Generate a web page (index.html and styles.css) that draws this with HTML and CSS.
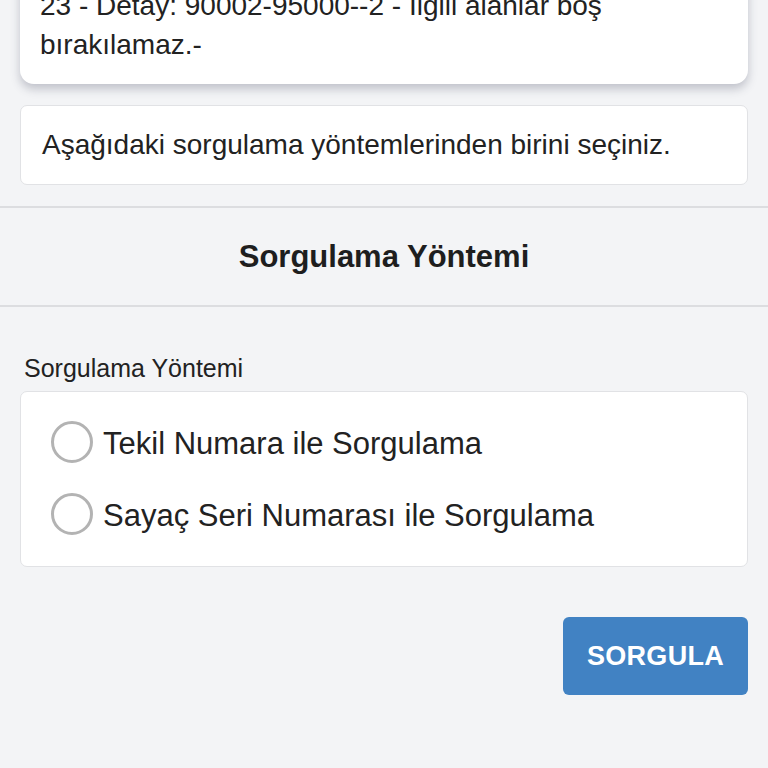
FILE: index.html
```html
<!DOCTYPE html>
<html lang="tr">
<head>
<meta charset="utf-8">
<title>Sorgulama</title>
<link rel="stylesheet" href="styles.css">
</head>
<body>
<div class="page">
  <div class="alert">23 - Detay: 90002-95000--2 - İlgili alanlar boş bırakılamaz.-</div>
  <div class="info">Aşağıdaki sorgulama yöntemlerinden birini seçiniz.</div>
  <div class="section-title">Sorgulama Yöntemi</div>
  <div class="field">
    <div class="field-label">Sorgulama Yöntemi</div>
    <div class="radio-card">
      <label class="radio-row"><span class="radio"></span><span class="radio-text">Tekil Numara ile Sorgulama</span></label>
      <label class="radio-row"><span class="radio"></span><span class="radio-text">Sayaç Seri Numarası ile Sorgulama</span></label>
    </div>
  </div>
  <div class="actions">
    <button class="btn">SORGULA</button>
  </div>
</div>
</body>
</html>
```
FILE: styles.css
```css
html, body {
  margin: 0;
  padding: 0;
  background: #f3f4f6;
  font-family: "Liberation Sans", Arial, sans-serif;
  color: #222;
  overflow: hidden;
}
.page {
  display: flex;
  flex-direction: column;
}
.alert {
  margin: -34px 20px 0;
  padding: 20px 20px;
  background: #fff;
  border-radius: 14px;
  box-shadow: 0 5px 10px rgba(60, 65, 90, 0.28);
  font-size: 28px;
  line-height: 39px;
}
.info {
  margin: 21px 20px 0;
  height: 78px;
  padding: 0 21px;
  display: flex;
  align-items: center;
  background: #fff;
  border: 1px solid #e1e2e5;
  border-radius: 7px;
  font-size: 28px;
}
.section-title {
  margin-top: 21px;
  height: 97px;
  border-top: 2px solid #dcdde0;
  border-bottom: 2px solid #dcdde0;
  display: flex;
  align-items: center;
  justify-content: center;
  font-size: 31px;
  font-weight: bold;
  color: #1e1e1e;
}
.field {
  margin: 47px 20px 0;
}
.field-label {
  padding-left: 4px;
  font-size: 25px;
  line-height: 28px;
  color: #222;
}
.radio-card {
  margin-top: 9px;
  padding: 15px 0;
  background: #fff;
  border: 1px solid #e1e2e5;
  border-radius: 7px;
}
.radio-row {
  height: 72px;
  display: flex;
  align-items: center;
  padding-left: 30px;
  gap: 10px;
}
.radio {
  width: 36px;
  height: 36px;
  border: 3px solid #b3b3b3;
  border-radius: 50%;
  flex: none;
  margin-top: -2px;
}
.radio-text {
  font-size: 31px;
  line-height: 36px;
  padding-top: 2px;
  color: #222;
}
.actions {
  margin: 50px 20px 0;
  display: flex;
  justify-content: flex-end;
}
.btn {
  width: 185px;
  height: 78px;
  border: none;
  border-radius: 6px;
  background: #4182c3;
  color: #fff;
  font-family: "Liberation Sans", Arial, sans-serif;
  font-weight: bold;
  font-size: 27px;
  letter-spacing: 0.3px;
  padding: 0;
}
```
